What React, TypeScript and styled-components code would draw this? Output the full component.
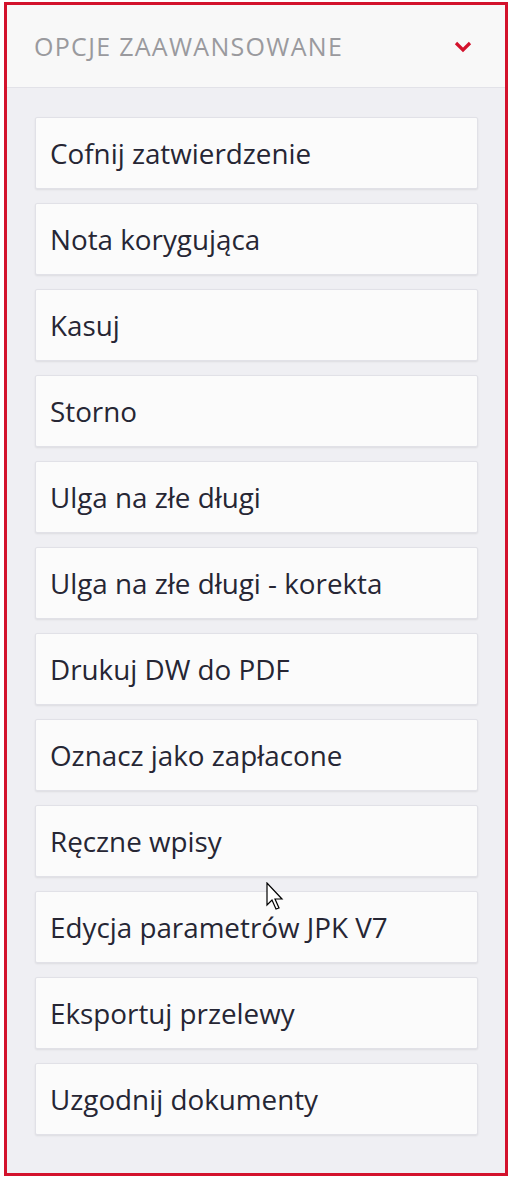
import styled, { createGlobalStyle } from 'styled-components';

const GlobalStyle = createGlobalStyle`
    html, body {
        margin: 0;
        padding: 0;
        background: #ffffff;
    }
    body {
        font-family: "Open Sans", "Liberation Sans", sans-serif;
    }
`;

const Page = styled.div`
    width: 512px;
    height: 1181px;
    padding: 2px 4px 0 4px;
    box-sizing: border-box;
`;

const Panel = styled.section`
    width: 504px;
    height: 1174px;
    box-sizing: border-box;
    border: 3px solid #d3122c;
    background: #efeff3;
    display: flex;
    flex-direction: column;
`;

const Header = styled.header`
    height: 82px;
    flex-shrink: 0;
    display: flex;
    align-items: center;
    justify-content: space-between;
    padding: 0 32px 0 27px;
    background: #f8f8f8;
    border-bottom: 1px solid #e2e2e8;
`;

const HeaderTitle = styled.h2`
    margin: 0;
    font-size: 25px;
    font-weight: 400;
    color: #9a9a9e;
    letter-spacing: 1.3px;
`;

const Chevron = styled.svg`
    width: 20px;
    height: 13px;
    display: block;
`;

const List = styled.div`
    display: flex;
    flex-direction: column;
    gap: 14px;
    padding: 29px 27px 0 28px;
`;

const ActionButton = styled.button`
    height: 72px;
    box-sizing: border-box;
    display: flex;
    align-items: center;
    padding: 0 14px;
    background: #fbfbfb;
    border: 1px solid #e1e1e7;
    border-radius: 2px;
    box-shadow: 0 1px 2px rgba(0, 0, 0, 0.08);
    font-family: "Open Sans", "Liberation Sans", sans-serif;
    font-size: 27.8px;
    color: #262634;
    text-align: left;
    cursor: pointer;
`;

const Cursor = styled.svg`
    position: absolute;
    left: 266px;
    top: 882px;
    width: 22px;
    height: 32px;
`;

const actions = [
    'Cofnij zatwierdzenie',
    'Nota korygująca',
    'Kasuj',
    'Storno',
    'Ulga na złe długi',
    'Ulga na złe długi - korekta',
    'Drukuj DW do PDF',
    'Oznacz jako zapłacone',
    'Ręczne wpisy',
    'Edycja parametrów JPK V7',
    'Eksportuj przelewy',
    'Uzgodnij dokumenty',
];

export default function App() {
    return (
        <>
            <GlobalStyle />
            <Page>
                <Panel>
                    <Header>
                        <HeaderTitle>OPCJE ZAAWANSOWANE</HeaderTitle>
                        <Chevron viewBox="0 0 20 13">
                            <path d="M3 3 L10 10 L17 3" fill="none" stroke="#d3122c" strokeWidth="3.2" />
                        </Chevron>
                    </Header>
                    <List>
                        {actions.map((a) => (
                            <ActionButton key={a}>{a}</ActionButton>
                        ))}
                    </List>
                </Panel>
            </Page>
            <Cursor viewBox="0 0 22 32">
                <path d="M1 1 L1 23 L6 18 L10 27 L13 26 L9 17 L16 17 Z" fill="#fff" stroke="#000" strokeWidth="1.2" />
            </Cursor>
        </>
    );
}
